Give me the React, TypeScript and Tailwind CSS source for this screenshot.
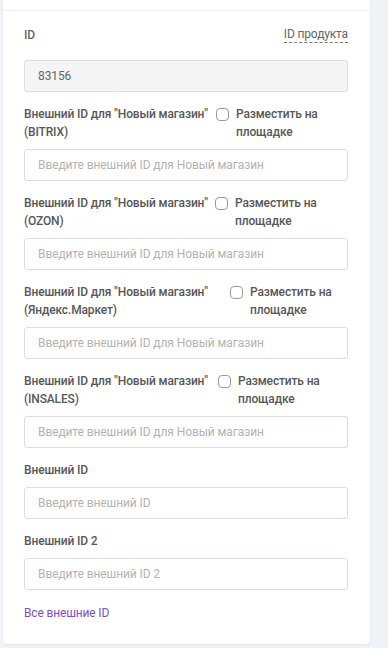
const font = { fontFamily: "Roboto, 'Noto Sans', sans-serif" };

type ShopField = { shop: string; labelWidth: string };

const shops: ShopField[] = [
  { shop: "BITRIX", labelWidth: "w-[188px]" },
  { shop: "OZON", labelWidth: "w-[187px]" },
  { shop: "Яндекс.Маркет", labelWidth: "w-[202px]" },
  { shop: "INSALES", labelWidth: "w-[190px]" },
];

function TextInput({ placeholder, value }: { placeholder?: string; value?: string }) {
  return (
    <input
      type="text"
      readOnly={value !== undefined}
      defaultValue={value}
      placeholder={placeholder}
      className={
        "block h-8 w-full rounded-[3px] border border-[#dadde2] px-[13px] text-[12px] tracking-[-0.1px] text-[#666] outline-none placeholder:text-[#b3b3b3] " +
        (value !== undefined ? "bg-[#f5f5f5]" : "bg-white")
      }
    />
  );
}

export default function App() {
  return (
    <div className="min-h-[648px] bg-[#eff2f6] pl-[3px] pr-[18px] pb-[5px]" style={font}>
      <div className="rounded-b-[4px] bg-white shadow-[0_1px_2px_rgba(0,0,0,0.06)]">
        <div className="h-[11px] border-b border-[#edf0f3]" />
        <div className="pl-[21px] pr-[22px] pt-[15px] pb-[22px] text-[12px] leading-[18px] tracking-[-0.15px]">
          <div className="mb-4 flex items-start justify-between">
            <span className="font-medium text-[#666]">ID</span>
            <span className="border-b border-dashed border-[#777] leading-[16px] text-[#666]">
              ID продукта
            </span>
          </div>
          <div className="mb-[13px]">
            <TextInput value="83156" />
          </div>

          {shops.map((s) => (
            <div key={s.shop} className="mb-[13px]">
              <div className="mb-2 flex items-start">
                <div className={"shrink-0 font-medium text-[#585858] " + s.labelWidth}>
                  <span className="block whitespace-nowrap">Внешний ID для "Новый магазин"</span>
                  <span className="block">({s.shop})</span>
                </div>
                <label className="ml-1 flex flex-1 items-start gap-[7px] font-medium text-[#585858]">
                  <span className="mt-[3px] block h-[13px] w-[13px] shrink-0 rounded-[4px] border border-[#9a9a9a] bg-white" />
                  <span>
                    <span className="block whitespace-nowrap">Разместить на</span>
                    <span className="block">площадке</span>
                  </span>
                </label>
              </div>
              <TextInput placeholder="Введите внешний ID для Новый магазин" />
            </div>
          ))}

          <div className="mb-[13px]">
            <div className="mb-2 font-medium text-[#585858]">Внешний ID</div>
            <TextInput placeholder="Введите внешний ID" />
          </div>
          <div className="mb-[14px]">
            <div className="mb-2 font-medium text-[#585858]">Внешний ID 2</div>
            <TextInput placeholder="Введите внешний ID 2" />
          </div>
          <a href="#" className="text-[#7c4fc6]">
            Все внешние ID
          </a>
        </div>
      </div>
    </div>
  );
}
